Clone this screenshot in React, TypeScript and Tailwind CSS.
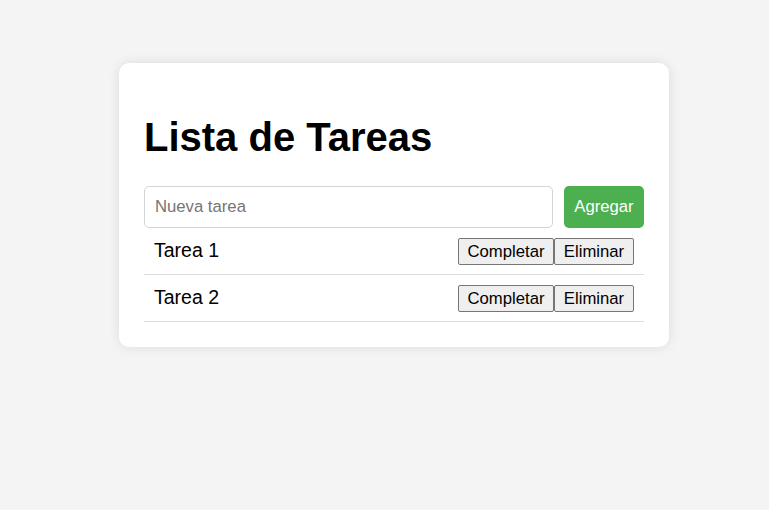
import { useState } from 'react'

interface Task {
  id: number
  text: string
  done: boolean
}

const initialTasks: Task[] = [
  { id: 1, text: 'Tarea 1', done: false },
  { id: 2, text: 'Tarea 2', done: false },
]

export default function App() {
  const [tasks, setTasks] = useState<Task[]>(initialTasks)
  const [value, setValue] = useState('')

  const addTask = () => {
    const text = value.trim()
    if (!text) return
    setTasks(prev => [...prev, { id: Date.now(), text, done: false }])
    setValue('')
  }

  const toggle = (id: number) =>
    setTasks(prev => prev.map(t => (t.id === id ? { ...t, done: !t.done } : t)))

  const remove = (id: number) => setTasks(prev => prev.filter(t => t.id !== id))

  return (
    <div className="min-h-[510px] bg-[#f4f4f4] pt-[63px] pl-[119px] font-['Liberation_Sans',Arial,sans-serif]">
      <div className="w-[550px] rounded-[10px] bg-white px-[25px] py-[25px] shadow-[0_0_12px_rgba(0,0,0,0.1)]">
        <h1 className="mt-[26px] mb-[26px] text-[40px] font-bold leading-[46px] text-black">Lista de Tareas</h1>

        <div className="flex gap-[11px]">
          <input
            value={value}
            onChange={e => setValue(e.target.value)}
            onKeyDown={e => { if (e.key === 'Enter') addTask() }}
            placeholder="Nueva tarea"
            className="h-[42px] flex-1 rounded-[5px] border border-[#d4d4d4] px-[10px] text-[16.7px] text-black outline-none placeholder:text-[#757575]"
          />
          <button
            type="button"
            onClick={addTask}
            className="h-[42px] w-[80px] rounded-[5px] bg-[#4caf50] text-[16.7px] text-white"
          >
            Agregar
          </button>
        </div>

        <ul>
          {tasks.map(task => (
            <li
              key={task.id}
              className="flex h-[47px] items-center justify-between border-b border-[#dddddd] px-[10px]"
            >
              <span className={'text-[19.5px] text-black ' + (task.done ? 'line-through' : '')}>{task.text}</span>
              <div className="flex">
                <button
                  type="button"
                  onClick={() => toggle(task.id)}
                  className="h-[27px] w-[96px] rounded-[2px] border border-[#767676] bg-[#efefef] text-[16.7px] text-black"
                >
                  Completar
                </button>
                <button
                  type="button"
                  onClick={() => remove(task.id)}
                  className="h-[27px] w-[80px] rounded-[2px] border border-[#767676] bg-[#efefef] text-[16.7px] text-black"
                >
                  Eliminar
                </button>
              </div>
            </li>
          ))}
        </ul>
      </div>
    </div>
  )
}
